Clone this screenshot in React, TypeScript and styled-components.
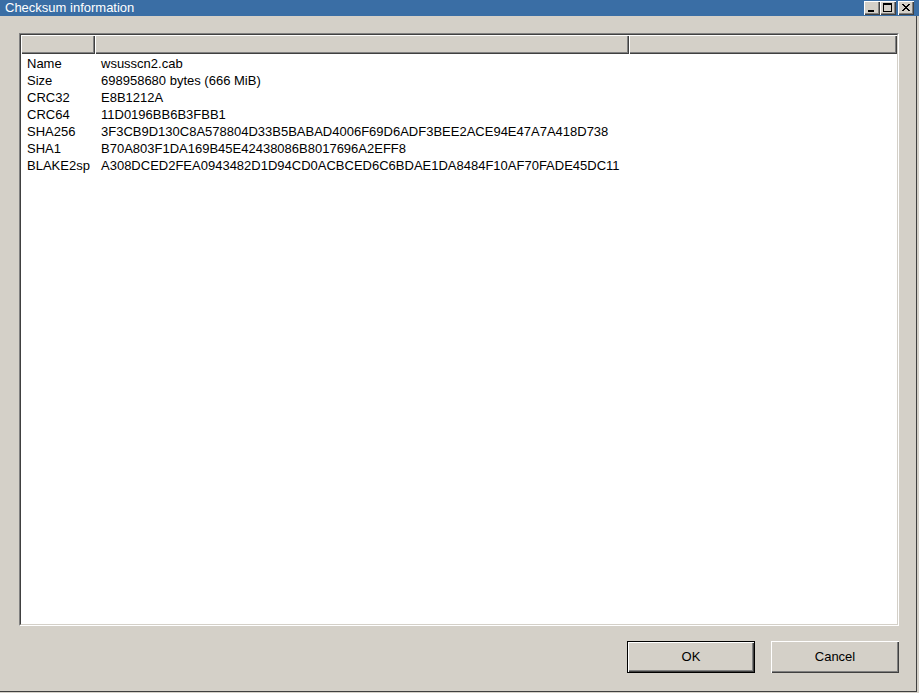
import React from "react";
import styled, { createGlobalStyle } from "styled-components";

const Global = createGlobalStyle`
  html, body { margin: 0; padding: 0; background: #d4d0c8; }
  body { font-family: "Liberation Sans", Arial, sans-serif; font-size: 13px; }
`;

const raised = "inset 1px 1px #fff, inset -1px -1px #404040, inset -2px -2px #808080";

const Window = styled.div`
  width: 917px;
  height: 692px;
  box-sizing: border-box;
  border-right: 1px solid #404040;
  border-bottom: 1px solid #404040;
  background: #d4d0c8;
  display: flex;
  flex-direction: column;
`;

const TitleBar = styled.div`
  height: 16px;
  width: 919px;
  background: #3a6ea5;
  display: flex;
  align-items: flex-start;
  justify-content: space-between;
  flex-shrink: 0;
`;

const Title = styled.div`
  color: #fff;
  font-size: 13px;
  line-height: 15px;
  padding-left: 5px;
`;

const Controls = styled.div`
  display: flex;
  padding: 1px 5px 0 0;
`;

const CtrlButton = styled.div<{ $gap?: boolean }>`
  width: 16px;
  height: 14px;
  box-sizing: border-box;
  background: #d4d0c8;
  margin-left: ${(p) => (p.$gap ? "2px" : "0")};
  box-shadow: ${raised};
  display: flex;
  align-items: center;
  justify-content: center;
`;

const Content = styled.div`
  flex: 1;
  display: flex;
  flex-direction: column;
  padding: 17px 0 0 19px;
`;

const ListView = styled.div`
  width: 880px;
  height: 593px;
  box-sizing: border-box;
  border: 1px solid;
  border-color: #808080 #fff #fff #808080;
  background: #fff;
  display: flex;
  flex-direction: column;
`;

const ListInner = styled.div`
  flex: 1;
  border: 1px solid;
  border-color: #404040 #d4d0c8 #d4d0c8 #404040;
  display: flex;
  flex-direction: column;
`;

const Header = styled.div`
  display: grid;
  grid-template-columns: 74px 534px 1fr;
  height: 19px;
  flex-shrink: 0;
`;

const HeaderCell = styled.div`
  background: #d4d0c8;
  box-shadow: ${raised};
`;

const Rows = styled.div`
  display: flex;
  flex-direction: column;
  padding-top: 1px;
`;

const Row = styled.div`
  display: grid;
  grid-template-columns: 74px 534px 1fr;
  height: 17px;
  line-height: 17px;
  color: #000;
  font-size: 13px;
`;

const Cell = styled.div`
  padding-left: 6px;
  white-space: nowrap;
`;

const ButtonRow = styled.div`
  display: flex;
  justify-content: flex-end;
  gap: 16px;
  width: 880px;
  padding-top: 15px;
`;

const Button = styled.div<{ $default?: boolean }>`
  width: 128px;
  height: 32px;
  box-sizing: border-box;
  background: #d4d0c8;
  display: flex;
  align-items: center;
  justify-content: center;
  padding-bottom: 2px;
  color: #000;
  font-size: 13px;
  border: ${(p) => (p.$default ? "1px solid #000" : "none")};
  box-shadow: ${raised};
`;

const rows: [string, string][] = [
  ["Name", "wsusscn2.cab"],
  ["Size", "698958680 bytes (666 MiB)"],
  ["CRC32", "E8B1212A"],
  ["CRC64", "11D0196BB6B3FBB1"],
  ["SHA256", "3F3CB9D130C8A578804D33B5BABAD4006F69D6ADF3BEE2ACE94E47A7A418D738"],
  ["SHA1", "B70A803F1DA169B45E42438086B8017696A2EFF8"],
  ["BLAKE2sp", "A308DCED2FEA0943482D1D94CD0ACBCED6C6BDAE1DA8484F10AF70FADE45DC11"],
];

export default function App() {
  return (
    <>
      <Global />
      <Window>
        <TitleBar>
          <Title>Checksum information</Title>
          <Controls>
            <CtrlButton>
              <svg width="16" height="14" viewBox="0 0 16 14">
                <rect x="4" y="9" width="6" height="2" fill="#000" />
              </svg>
            </CtrlButton>
            <CtrlButton>
              <svg width="16" height="14" viewBox="0 0 16 14">
                <rect x="3.5" y="2.5" width="8" height="8" fill="none" stroke="#000" />
                <rect x="3" y="2" width="9" height="2" fill="#000" />
              </svg>
            </CtrlButton>
            <CtrlButton $gap>
              <svg width="16" height="14" viewBox="0 0 16 14">
                <path d="M4 3 L11 10 M5 3 L12 10 M11 3 L4 10 M12 3 L5 10" stroke="#000" strokeWidth="1" />
              </svg>
            </CtrlButton>
          </Controls>
        </TitleBar>
        <Content>
          <ListView>
            <ListInner>
              <Header>
                <HeaderCell />
                <HeaderCell />
                <HeaderCell />
              </Header>
              <Rows>
                {rows.map(([k, v]) => (
                  <Row key={k}>
                    <Cell>{k}</Cell>
                    <Cell>{v}</Cell>
                    <Cell />
                  </Row>
                ))}
              </Rows>
            </ListInner>
          </ListView>
          <ButtonRow>
            <Button $default>OK</Button>
            <Button>Cancel</Button>
          </ButtonRow>
        </Content>
      </Window>
    </>
  );
}
